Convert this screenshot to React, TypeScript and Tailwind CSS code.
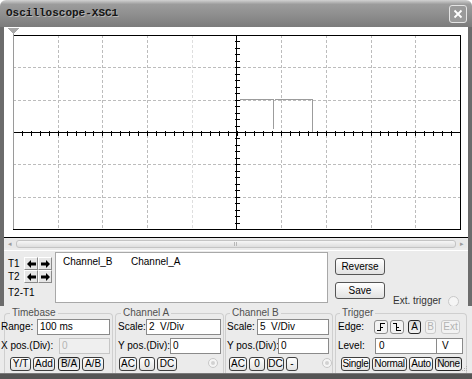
import React from "react";

const ui = "font-['Liberation_Sans',Arial,sans-serif] text-[10px] leading-[12px] text-black whitespace-nowrap";

type Tone = "normal" | "pressed" | "flat" | "disabled";

const tones: Record<Tone, string> = {
  normal: "border-[#3e3e3e] bg-gradient-to-b from-white to-[#e2e2e2] text-black",
  pressed: "border-[#262626] bg-gradient-to-b from-[#dcdcdc] to-[#f2f2f2] text-black",
  flat: "border-[#8e8e8e] bg-[#f3f3f3] text-black",
  disabled: "border-[#cacaca] bg-[#f2f2f2] text-[#b2b2b2]",
};

function Btn({ tone = "normal", className = "", children }: { tone?: Tone; className?: string; children: React.ReactNode }) {
  return (
    <div
      className={`flex shrink-0 items-center justify-center whitespace-nowrap rounded-[3px] border leading-none ${tones[tone]} ${className}`}
    >
      {children}
    </div>
  );
}

function Field({ className = "", disabled = false, children }: { className?: string; disabled?: boolean; children?: React.ReactNode }) {
  return (
    <div
      className={`flex h-[16px] shrink-0 items-center whitespace-pre border pl-[2px] ${
        disabled ? "border-[#c6c6c6] bg-[#efefef] text-[#b4b4b4]" : "border-[#8a8a8a] bg-white"
      } ${className}`}
    >
      {children}
    </div>
  );
}

function Radio({ dot = false, className = "" }: { dot?: boolean; className?: string }) {
  return (
    <div
      className={`flex h-[10px] w-[10px] shrink-0 items-center justify-center rounded-full border border-[#c8c8c8] bg-[#f5f5f5] ${className}`}
    >
      {dot && <div className="h-[4px] w-[4px] rounded-full bg-[#d2d2d2]" />}
    </div>
  );
}

function Group({ label, labelPos, className, children }: { label: string; labelPos: string; className: string; children: React.ReactNode }) {
  return (
    <div className={`relative mt-[7px] h-[60px] shrink-0 rounded-t-[4px] border border-b-0 border-[#cfcfcf] ${className}`}>
      <span className={`absolute top-[-7px] bg-[#ebebeb] px-[2px] text-[#505050] ${labelPos}`}>{label}</span>
      <div className="flex flex-col pt-[5px]">{children}</div>
    </div>
  );
}

function Arrow({ dir }: { dir: "l" | "r" }) {
  return (
    <div className="flex h-[13px] w-[14px] items-center justify-center border border-b-[#8a8a8a] border-l-white border-r-[#8a8a8a] border-t-white bg-[#e6e6e6]">
      <svg width="9" height="8" viewBox="0 0 9 8">
        <path
          d={dir === "l" ? "M0 4 L4 0 V2.5 H9 V5.5 H4 V8 Z" : "M9 4 L5 0 V2.5 H0 V5.5 H5 V8 Z"}
          fill="#000"
        />
      </svg>
    </div>
  );
}

function Screen() {
  const L = 9;
  const T = 8;
  const R = 456;
  const B = 202;
  const dx = (R - L) / 10;
  const dy = (B - T) / 6;
  const cx = 232.5;
  const cy = 105.5;
  const vLines = [1, 2, 3, 4, 6, 7, 8, 9].map((i) => Math.round(L + dx * i) + 0.5);
  const hLines = [1, 2, 4, 5].map((i) => Math.round(T + dy * i) + 0.5);
  const vTicks = Array.from({ length: 31 }, (_, i) => Math.round(T + (dy / 5) * i) + 0.5).filter((y) => y > T + 2 && y < B - 2);
  const hTicks = Array.from({ length: 51 }, (_, i) => Math.round(L + (dx / 5) * i) + 0.5).filter((x) => x > L + 2 && x < R - 2);
  return (
    <svg width="464" height="210" className="block" shapeRendering="crispEdges">
      {vLines.map((x, i) => (
        <line key={x} x1={x} y1={T} x2={x} y2={B} stroke={i === 3 ? "#dedede" : "#bcbcbc"} strokeDasharray="3 2" />
      ))}
      {hLines.map((y) => (
        <line key={y} x1={L} y1={y} x2={R} y2={y} stroke="#bcbcbc" strokeDasharray="3 2" />
      ))}
      <line x1={cx} y1={T} x2={cx} y2={B} stroke="#000" />
      <line x1={L} y1={cy} x2={R} y2={cy} stroke="#000" />
      {vTicks.map((y) => (
        <line key={`v${y}`} x1={cx - 2} y1={y} x2={cx + 3} y2={y} stroke="#000" />
      ))}
      {hTicks.map((x) => (
        <line key={`h${x}`} x1={x} y1={cy - 2} x2={x} y2={cy + 3} stroke="#000" />
      ))}
      {/* waveform */}
      <path d="M236 72.5 H269.5 V102 M270.5 72.5 H308.5 V105" fill="none" stroke="#9c9c9c" />
      {/* plot frame */}
      <path d={`M${L} ${T + 0.5} H${R + 0.5} V${B + 0.5} H${L}`} fill="none" stroke="#000" />
      <line x1={L + 0.5} y1={5} x2={L + 0.5} y2={B} stroke="#9a9a9a" />
      {/* cursor 1 marker */}
      <path d="M3 1 H16 L9.5 7 Z" fill="#a8a8a8" />
    </svg>
  );
}

function EdgeIcon({ fall }: { fall?: boolean }) {
  return (
    <svg width="10" height="10" viewBox="0 0 10 10" shapeRendering="crispEdges">
      <path
        d={fall ? "M1 1.5 H4.5 V8.5 H9 M4.5 5 H7" : "M1 8.5 H4.5 V1.5 H9 M4.5 5 H7"}
        fill="none"
        stroke="#000"
      />
    </svg>
  );
}

export default function App() {
  return (
    <div className={`flex h-[379px] w-[472px] flex-col overflow-hidden bg-white ${ui}`}>
      {/* title bar */}
      <div className="flex h-[27px] shrink-0 items-center rounded-t-[6px] bg-[linear-gradient(#d2d2d2_0%,#9c9c9c_16%,#8e8e8e_55%,#7c7c7c_100%)]">
        <span className="ml-[6px] font-['Liberation_Mono',monospace] text-[11px] font-bold leading-none text-[#151515] [text-shadow:1px_1px_0_#b4b4b4]">
          Oscilloscope-XSC1
        </span>
        <div className="ml-auto mr-[5px] flex h-[18px] w-[18px] items-center justify-center rounded-[3px] border border-[#e4e4e4] bg-[#9a9a9a]">
          <svg width="10" height="10" viewBox="0 0 10 10">
            <path d="M1.5 1.5 L8.5 8.5 M8.5 1.5 L1.5 8.5" stroke="#fff" strokeWidth="1.8" />
          </svg>
        </div>
      </div>

      {/* framed upper part */}
      <div className="flex h-[279px] shrink-0">
        <div className="w-[4px] bg-[#6c6c6c]" />
        <div className="flex w-[464px] flex-col bg-[#ebebeb]">
          <div className="h-[211px] border-b border-black bg-white">
            <Screen />
          </div>
          {/* scrollbar */}
          <div className="mx-[1px] mt-[1px] flex h-[9px] items-center bg-[#e8e8e8]">
            <div className="flex h-[9px] w-[10px] items-center justify-center text-[7px] text-[#9a9a9a]">◂</div>
            <div className="relative ml-[1px] h-[8px] flex-1 rounded-[3px] border border-[#c4c4c4] bg-gradient-to-b from-[#f6f6f6] to-[#dedede]">
              <div className="absolute left-[217px] top-[1px] flex gap-[1px]">
                <div className="h-[4px] w-px bg-[#b8b8b8]" />
                <div className="h-[4px] w-px bg-[#b8b8b8]" />
              </div>
            </div>
            <div className="ml-[1px] flex h-[9px] w-[10px] items-center justify-center text-[7px] text-[#9a9a9a]">▸</div>
          </div>
          {/* cursor row */}
          <div className="mt-[2px] flex h-[56px] border-t border-white">
            <div className="flex w-[51px] shrink-0 flex-col pl-[4px] pt-[6px]">
              <div className="flex items-center">
                <span className="w-[16px]">T1</span>
                <Arrow dir="l" />
                <Arrow dir="r" />
              </div>
              <div className="flex items-center">
                <span className="w-[16px]">T2</span>
                <Arrow dir="l" />
                <Arrow dir="r" />
              </div>
              <span className="mt-[4px]">T2-T1</span>
            </div>
            <div className="mt-[1px] flex h-[51px] w-[273px] shrink-0 border border-[#a8a8a8] bg-white pl-[7px] pt-[3px]">
              <span className="w-[68px]">Channel_B</span>
              <span>Channel_A</span>
            </div>
            <div className="ml-[7px] flex w-[50px] shrink-0 flex-col">
              <Btn className="mt-[7px] h-[17px] w-[50px] border-[#555]">Reverse</Btn>
              <Btn className="mt-[7px] h-[17px] w-[50px] border-[#555]">Save</Btn>
            </div>
            <div className="ml-[8px] mt-[44px] flex h-[12px] items-center">
              <span className="text-[#333]">Ext. trigger</span>
              <Radio className="ml-[7px] h-[11px] w-[11px]" />
            </div>
          </div>
        </div>
        <div className="w-[4px] bg-[#6c6c6c]" />
      </div>

      {/* control groups */}
      <div className="relative flex h-[67px] shrink-0 bg-[#ebebeb]">
        <Group label="Timebase" labelPos="left-[5px]" className="ml-[4px] w-[109px]">
          <div className="-ml-[4px] flex h-[16px] items-center">
            <span className="w-[36px] shrink-0">Range:</span>
            <Field className="w-[73px]">100 ms</Field>
          </div>
          <div className="-ml-[4px] mt-[3px] flex h-[16px] items-center">
            <span className="w-[58px] shrink-0">X pos.(Div):</span>
            <Field disabled className="w-[51px]">0</Field>
          </div>
          <div className="ml-[5px] mt-[3px] flex h-[14px]">
            <Btn className="h-[14px] w-[21px]">Y/T</Btn>
            <Btn className="ml-[2px] h-[14px] w-[22px]">Add</Btn>
            <Btn tone="pressed" className="ml-[3px] h-[14px] w-[22px]">B/A</Btn>
            <Btn className="ml-[2px] h-[14px] w-[22px]">A/B</Btn>
          </div>
        </Group>

        <Group label="Channel A" labelPos="left-[5px]" className="ml-[2px] w-[109px]">
          <div className="ml-[2px] flex h-[16px] items-center">
            <span className="w-[28px] shrink-0">Scale:</span>
            <Field className="w-[75px]">2  V/Div</Field>
          </div>
          <div className="ml-[2px] mt-[3px] flex h-[16px] items-center">
            <span className="w-[52px] shrink-0">Y pos.(Div):</span>
            <Field className="w-[51px]">0</Field>
          </div>
          <div className="ml-[3px] mt-[3px] flex h-[14px]">
            <Btn className="h-[14px] w-[18px]">AC</Btn>
            <Btn className="ml-[2px] h-[14px] w-[16px]">0</Btn>
            <Btn className="ml-[2px] h-[14px] w-[20px]">DC</Btn>
            <Radio dot className="ml-[31px] mt-[1px]" />
          </div>
        </Group>

        <Group label="Channel B" labelPos="left-[4px]" className="ml-[1px] w-[108px]">
          <div className="ml-[1px] flex h-[16px] items-center">
            <span className="w-[30px] shrink-0">Scale:</span>
            <Field className="w-[72px]">5  V/Div</Field>
          </div>
          <div className="ml-[1px] mt-[3px] flex h-[16px] items-center">
            <span className="w-[51px] shrink-0">Y pos.(Div):</span>
            <Field className="w-[51px]">0</Field>
          </div>
          <div className="ml-[3px] mt-[3px] flex h-[14px]">
            <Btn className="h-[14px] w-[18px]">AC</Btn>
            <Btn className="ml-[2px] h-[14px] w-[16px]">0</Btn>
            <Btn className="ml-[2px] h-[14px] w-[17px]">DC</Btn>
            <Btn className="ml-[2px] h-[14px] w-[12px]">-</Btn>
            <Radio dot className="ml-[24px] mt-[1px]" />
          </div>
        </Group>

        <Group label="Trigger" labelPos="left-[4px]" className="ml-[2px] w-[132px]">
          <div className="ml-[2px] flex h-[16px] items-center">
            <span className="w-[36px] shrink-0">Edge:</span>
            <Btn tone="flat" className="h-[14px] w-[14px] rounded-[1px]">
              <EdgeIcon />
            </Btn>
            <Btn tone="flat" className="ml-[2px] h-[14px] w-[14px] rounded-[1px]">
              <EdgeIcon fall />
            </Btn>
            <Btn tone="pressed" className="ml-[4px] h-[14px] w-[13px]">A</Btn>
            <Btn tone="disabled" className="ml-[4px] h-[14px] w-[11px]">B</Btn>
            <Btn tone="disabled" className="ml-[5px] h-[14px] w-[19px]">Ext</Btn>
          </div>
          <div className="ml-[2px] mt-[3px] flex h-[16px] items-center">
            <span className="w-[37px] shrink-0">Level:</span>
            <Field className="w-[62px] items-end pb-[1px] pl-[3px]">0</Field>
            <Field className="-ml-px w-[27px] items-end pb-[1px] pl-[5px]">V</Field>
          </div>
          <div className="ml-[5px] mt-[3px] flex h-[14px]">
            <Btn className="h-[14px] w-[29px] tracking-[-0.3px]">Single</Btn>
            <Btn className="ml-[2px] h-[14px] w-[35px] tracking-[-0.3px]">Normal</Btn>
            <Btn className="ml-[2px] h-[14px] w-[24px] tracking-[-0.3px]">Auto</Btn>
            <Btn tone="pressed" className="ml-[2px] h-[14px] w-[27px] tracking-[-0.3px]">None</Btn>
          </div>
        </Group>

        <svg width="6" height="6" className="absolute bottom-[1px] right-[4px]">
          <rect x="4" y="0" width="1" height="1" fill="#b0b0b0" />
          <rect x="2" y="2" width="1" height="1" fill="#b0b0b0" />
          <rect x="4" y="2" width="1" height="1" fill="#b0b0b0" />
          <rect x="0" y="4" width="1" height="1" fill="#b0b0b0" />
          <rect x="2" y="4" width="1" height="1" fill="#b0b0b0" />
          <rect x="4" y="4" width="1" height="1" fill="#b0b0b0" />
        </svg>
      </div>

      <div className="h-[6px] shrink-0 border-t border-[#7a7a7a] bg-[#555]" />
    </div>
  );
}
